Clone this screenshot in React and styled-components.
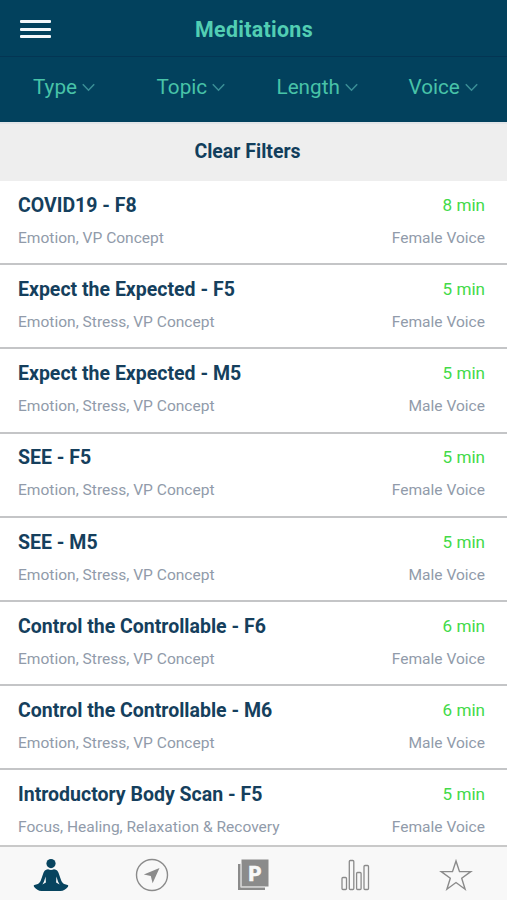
import React from "react";
import styled, { createGlobalStyle } from "styled-components";

const GlobalStyle = createGlobalStyle`
  * { box-sizing: border-box; }
  body { margin: 0; background: #fff; font-family: Roboto, "Liberation Sans", sans-serif; }
  button { border: 0; padding: 0; background: none; font: inherit; color: inherit; }
`;

const Screen = styled.div`
  display: flex;
  flex-direction: column;
  width: 100%;
  height: 100vh;
  overflow: hidden;
`;

const Header = styled.header`
  display: grid;
  grid-template-columns: 50px 1fr 49px;
  align-items: center;
  height: 57px;
  flex: none;
  padding-top: 2px;
  background: #02415d;
  border-bottom: 1px solid #033553;
`;

const MenuButton = styled.button`
  display: flex;
  flex-direction: column;
  gap: 4.4px;
  width: 31px;
  margin-left: 20px;
`;

const MenuBar = styled.span`
  height: 3px;
  border-radius: 1px;
  background: #f4f8fb;
`;

const Title = styled.h1`
  margin: 0;
  padding-top: 1px;
  text-align: center;
  font-size: 21.4px;
  line-height: 24px;
  font-weight: 700;
  letter-spacing: 0.3px;
  color: #52ceb3;
`;

const Filters = styled.nav`
  display: grid;
  grid-template-columns: 156px 120.5px 132px 98.5px;
  align-items: center;
  height: 65px;
  flex: none;
  padding-bottom: 5px;
  background: #02415d;
`;

const FilterButton = styled.button`
  display: flex;
  align-items: center;
  gap: 5px;
  margin-left: ${(p) => p.$inset}px;
  font-size: 20.7px;
  line-height: 24px;
  color: #48c3a8;
`;

const Chevron = styled.svg`
  width: 13px;
  height: 9px;
  fill: none;
  stroke: #398d95;
  stroke-width: 1.6;
`;

const ClearBar = styled.button`
  height: 59px;
  flex: none;
  border-top: 2px solid #e2e5e8;
  padding: 0 12px 2px 0;
  background: #eee;
  color: #123e5c;
  font-size: 19.5px;
  font-weight: 700;
`;

const List = styled.main`
  flex: 1;
  min-height: 0;
  overflow: hidden;
  background: #fff;
`;

const Row = styled.article`
  display: grid;
  grid-template-columns: 1fr auto;
  grid-template-rows: 24px 20px;
  row-gap: 10px;
  height: 84.2px;
  padding: 12.8px 22px 0 18px;
  border-bottom: 2px solid #c4c5c7;
`;

const Name = styled.h2`
  margin: 0;
  font-size: 19.5px;
  line-height: 24px;
  font-weight: 700;
  color: #153f5d;
`;

const Duration = styled.span`
  text-align: right;
  font-size: 17.1px;
  line-height: 22px;
  color: #42da48;
`;

const Meta = styled.span`
  text-align: ${(p) => (p.$end ? "right" : "left")};
  font-size: 15.55px;
  line-height: 20px;
  color: #919baa;
`;

const TabBar = styled.footer`
  display: grid;
  grid-template-columns: repeat(5, 1fr);
  flex: none;
  height: 55px;
  border-top: 2px solid #c9c9c9;
  background: #f8f8f8;
`;

const Tab = styled.button`
  display: flex;
  align-items: center;
  justify-content: center;
  color: ${(p) => (p.$active ? "#07445f" : "#8b8b8b")};
`;

const Icon = styled.svg`
  width: 36px;
  height: 36px;
  margin-top: 3px;
  fill: none;
  stroke: currentColor;
`;

const BadgeLetter = styled.text`
  font: 900 20px Roboto, sans-serif;
  fill: #f8f8f8;
  stroke: #f8f8f8;
  stroke-width: 0.5;
  text-anchor: middle;
`;

const filters = [
  ["Type", 33],
  ["Topic", 0.5],
  ["Length", 0],
  ["Voice", 0],
];

const meditations = [
  ["COVID19 - F8", "8 min", "Emotion, VP Concept", "Female Voice"],
  ["Expect the Expected - F5", "5 min", "Emotion, Stress, VP Concept", "Female Voice"],
  ["Expect the Expected - M5", "5 min", "Emotion, Stress, VP Concept", "Male Voice"],
  ["SEE - F5", "5 min", "Emotion, Stress, VP Concept", "Female Voice"],
  ["SEE - M5", "5 min", "Emotion, Stress, VP Concept", "Male Voice"],
  ["Control the Controllable - F6", "6 min", "Emotion, Stress, VP Concept", "Female Voice"],
  ["Control the Controllable - M6", "6 min", "Emotion, Stress, VP Concept", "Male Voice"],
  ["Introductory Body Scan - F5", "5 min", "Focus, Healing, Relaxation & Recovery", "Female Voice"],
];

const MeditateIcon = () => (
  <Icon viewBox="0 0 36 36">
    <g fill="currentColor" stroke="none">
      <circle cx="18" cy="6.6" r="4.6" />
      <path d="M15 12.200Q18 13.600 21 12.200C23.800 12.400 25 14 25.600 16L28.200 23.500C29 25.500 30 26.600 32 27.200L34.600 28C35.500 28.400 35.400 29.200 34.800 29.900C33 32 30.500 34 27.500 34H8.500C5.500 34 3 32 1.200 29.900C.6 29.200.5 28.400 1.400 28L4 27.200C6 26.600 7 25.500 7.800 23.500L10.400 16C11 14 12.200 12.400 15 12.200Z" />
    </g>
    <path d="M12.600 19.500 12.900 25.500 9.400 27.600 11 24.600ZM23.400 19.500 23.100 25.500 26.600 27.600 25 24.600Z" fill="#f8f8f8" stroke="none" />
  </Icon>
);

const CompassIcon = () => (
  <Icon viewBox="0 0 36 36">
    <circle cx="18" cy="18" r="15.5" strokeWidth="1.4" />
    <path d="M25.500 11 9.800 17.500l7 1.600 1.800 7.200z" fill="currentColor" stroke="none" />
  </Icon>
);

const ProgramIcon = () => (
  <Icon viewBox="0 0 36 36">
    <path d="M3 7v26h27v-2.500H5.500V7z" fill="currentColor" stroke="none" />
    <path d="M6.500 2.500h27v27h-27z" fill="currentColor" stroke="none" />
    <path d="M6.200 6v23.800H30" stroke="#d0d0d0" strokeWidth="0.8" />
    <BadgeLetter x="20" y="23.5">P</BadgeLetter>
  </Icon>
);

const StatsIcon = () => (
  <Icon viewBox="0 0 36 36" strokeWidth="1.3">
    <rect x="5" y="20.5" width="4.5" height="12" rx="1" />
    <rect x="12.3" y="3.5" width="4.5" height="29" rx="1" />
    <rect x="19.600" y="15.5" width="4.5" height="17" rx="1" />
    <rect x="27" y="8.5" width="4.5" height="24" rx="1" />
  </Icon>
);

const StarIcon = () => (
  <Icon viewBox="0 0 36 36" strokeWidth="1.4">
    <path d="m18 4 3.500 10.600h11.300l-9.100 6.700 3.400 10.900L18 25.500l-9.100 6.700 3.400-10.900-9.100-6.700h11.300z" />
  </Icon>
);

const tabs = [
  ["Meditations", MeditateIcon],
  ["Explore", CompassIcon],
  ["Programs", ProgramIcon],
  ["Statistics", StatsIcon],
  ["Favorites", StarIcon],
];

export default function App() {
  return (
    <Screen>
      <GlobalStyle />
      <Header>
        <MenuButton aria-label="Menu">
          <MenuBar />
          <MenuBar />
          <MenuBar />
        </MenuButton>
        <Title>Meditations</Title>
      </Header>
      <Filters>
        {filters.map(([label, inset]) => (
          <FilterButton key={label} $inset={inset}>
            {label}
            <Chevron viewBox="0 0 13 9">
              <path d="m.8 1.200 5.700 6 5.700-6" />
            </Chevron>
          </FilterButton>
        ))}
      </Filters>
      <ClearBar>Clear Filters</ClearBar>
      <List>
        {meditations.map(([name, duration, topics, voice]) => (
          <Row key={name}>
            <Name>{name}</Name>
            <Duration>{duration}</Duration>
            <Meta>{topics}</Meta>
            <Meta $end>{voice}</Meta>
          </Row>
        ))}
      </List>
      <TabBar>
        {tabs.map(([label, Glyph], i) => (
          <Tab key={label} aria-label={label} $active={i === 0}>
            <Glyph />
          </Tab>
        ))}
      </TabBar>
    </Screen>
  );
}
